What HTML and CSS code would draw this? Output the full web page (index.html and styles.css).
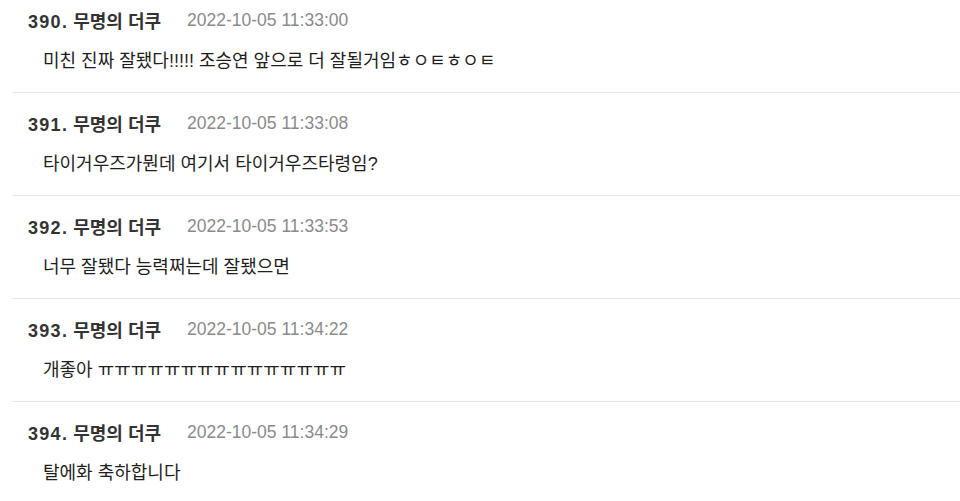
FILE: index.html
```html
<!DOCTYPE html>
<html lang="ko">
<head>
<meta charset="utf-8">
<title>댓글</title>
<link rel="stylesheet" href="styles.css">
</head>
<body>
<ul class="comments">
  <li class="comment">
    <div class="meta"><span class="author"><span class="num">390.</span> 무명의 더쿠</span><span class="date">2022-10-05 11:33:00</span></div>
    <p class="text">미친 진짜 잘됐다!!!!! 조승연 앞으로 더 잘될거임ㅎㅇㅌㅎㅇㅌ</p>
  </li>
  <li class="comment">
    <div class="meta"><span class="author"><span class="num">391.</span> 무명의 더쿠</span><span class="date">2022-10-05 11:33:08</span></div>
    <p class="text">타이거우즈가뭔데 여기서 타이거우즈타령임?</p>
  </li>
  <li class="comment">
    <div class="meta"><span class="author"><span class="num">392.</span> 무명의 더쿠</span><span class="date">2022-10-05 11:33:53</span></div>
    <p class="text">너무 잘됐다 능력쩌는데 잘됐으면</p>
  </li>
  <li class="comment">
    <div class="meta"><span class="author"><span class="num">393.</span> 무명의 더쿠</span><span class="date">2022-10-05 11:34:22</span></div>
    <p class="text">개좋아 ㅠㅠㅠㅠㅠㅠㅠㅠㅠㅠㅠㅠㅠㅠㅠ</p>
  </li>
  <li class="comment">
    <div class="meta"><span class="author"><span class="num">394.</span> 무명의 더쿠</span><span class="date">2022-10-05 11:34:29</span></div>
    <p class="text">탈에화 축하합니다</p>
  </li>
</ul>
</body>
</html>
```
FILE: styles.css
```css
html, body {
  margin: 0;
  padding: 0;
  background: #fff;
}
body {
  font-family: "Liberation Sans", "Noto Sans CJK KR", sans-serif;
  color: #222;
  overflow: hidden;
}
.comments {
  list-style: none;
  margin: -10px 0 0 12px;
  padding: 0;
}
.comment {
  padding: 18px 0 19px 0;
  border-bottom: 1px solid #e8e8e8;
}
.meta {
  display: flex;
  align-items: center;
  gap: 26px;
  height: 24px;
  padding-left: 16px;
}
.author {
  font-size: 18px;
  font-weight: bold;
  color: #333;
}
.num {
  letter-spacing: 1.3px;
}
.date {
  font-size: 17.5px;
  color: #8a8a8a;
}
.text {
  margin: 17px 0 0 0;
  padding-left: 31px;
  height: 24px;
  line-height: 24px;
  font-size: 18px;
  color: #1e1e1e;
}
```
